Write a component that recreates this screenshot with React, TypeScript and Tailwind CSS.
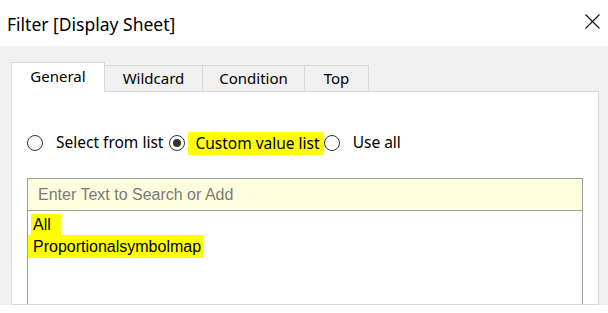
import React from "react";

const ui = { fontFamily: '"Noto Sans", "Open Sans", sans-serif' };
const tah = { fontFamily: '"Liberation Sans", Arial, sans-serif' };

function Radio({ checked }: { checked?: boolean }) {
  return (
    <span className="flex h-[16px] w-[16px] shrink-0 items-center justify-center rounded-full border border-[#333] bg-white">
      {checked && <span className="h-[8px] w-[8px] rounded-full bg-[#333]" />}
    </span>
  );
}

export default function App() {
  return (
    <div className="h-[313px] w-[608px] overflow-hidden bg-white" style={ui}>
      <div className="flex h-[46px] items-center justify-between pl-[7px] pr-[8px]">
        <span className="mt-[3px] text-[17.5px] text-black">Filter [Display Sheet]</span>
        <svg width="15" height="15" viewBox="0 0 15 15" className="mb-[3px]">
          <path d="M0.5 0.5 L14.5 14.5 M14.5 0.5 L0.5 14.5" stroke="#111" strokeWidth="1.1" />
        </svg>
      </div>
      <div className="flex h-[259px] flex-col overflow-hidden bg-[#f0f0f0] pl-[11px] pr-[9px] pt-[16px]">
        <div className="relative z-10 flex items-end">
          <div className="mb-[-1px] flex h-[30px] w-[94px] items-center justify-center border border-b-0 border-[#d9d9d9] bg-white pb-[2px] text-[15px] text-black">
            General
          </div>
          <div className="flex h-[26px] w-[98px] items-center justify-center border border-b-0 border-l-0 border-[#d9d9d9] text-[15px] text-black">
            Wildcard
          </div>
          <div className="flex h-[26px] w-[102px] items-center justify-center border border-b-0 border-l-0 border-[#d9d9d9] text-[15px] text-black">
            Condition
          </div>
          <div className="flex h-[26px] w-[64px] items-center justify-center border border-b-0 border-l-0 border-[#d9d9d9] text-[15px] text-black">
            Top
          </div>
        </div>
        <div className="flex flex-1 flex-col border border-[#d9d9d9] bg-white pl-[15px] pr-[15px]">
          <div className="mt-[42px] flex h-[18px] items-center text-[15.5px] text-black">
            <Radio />
            <span className="ml-[13px]">Select from list</span>
            <span className="ml-[6px]"><Radio checked /></span>
            <span className="ml-[3px] bg-[#ffff00] pl-[7px] pr-[4px] leading-[23px]">Custom value list</span>
            <Radio />
            <span className="ml-[13px]">Use all</span>
          </div>
          <div className="mt-[26px] flex h-[33px] items-center border border-[#a0a0a0] bg-[#ffffdf] pl-[10px] text-[16px] text-[#7a7a7a]" style={tah}>
            Enter Text to Search or Add
          </div>
          <div className="flex flex-1 flex-col items-start border-x border-[#a0a0a0] pt-[3px] text-[16px] leading-[21px] text-black" style={tah}>
            <span className="ml-[3px] bg-[#ffff00] pl-[2px] pr-[10px]">All</span>
            <span className="bg-[#ffff00] py-[1px] pl-[5px] pr-[3px]">Proportionalsymbolmap</span>
          </div>
        </div>
      </div>
    </div>
  );
}
